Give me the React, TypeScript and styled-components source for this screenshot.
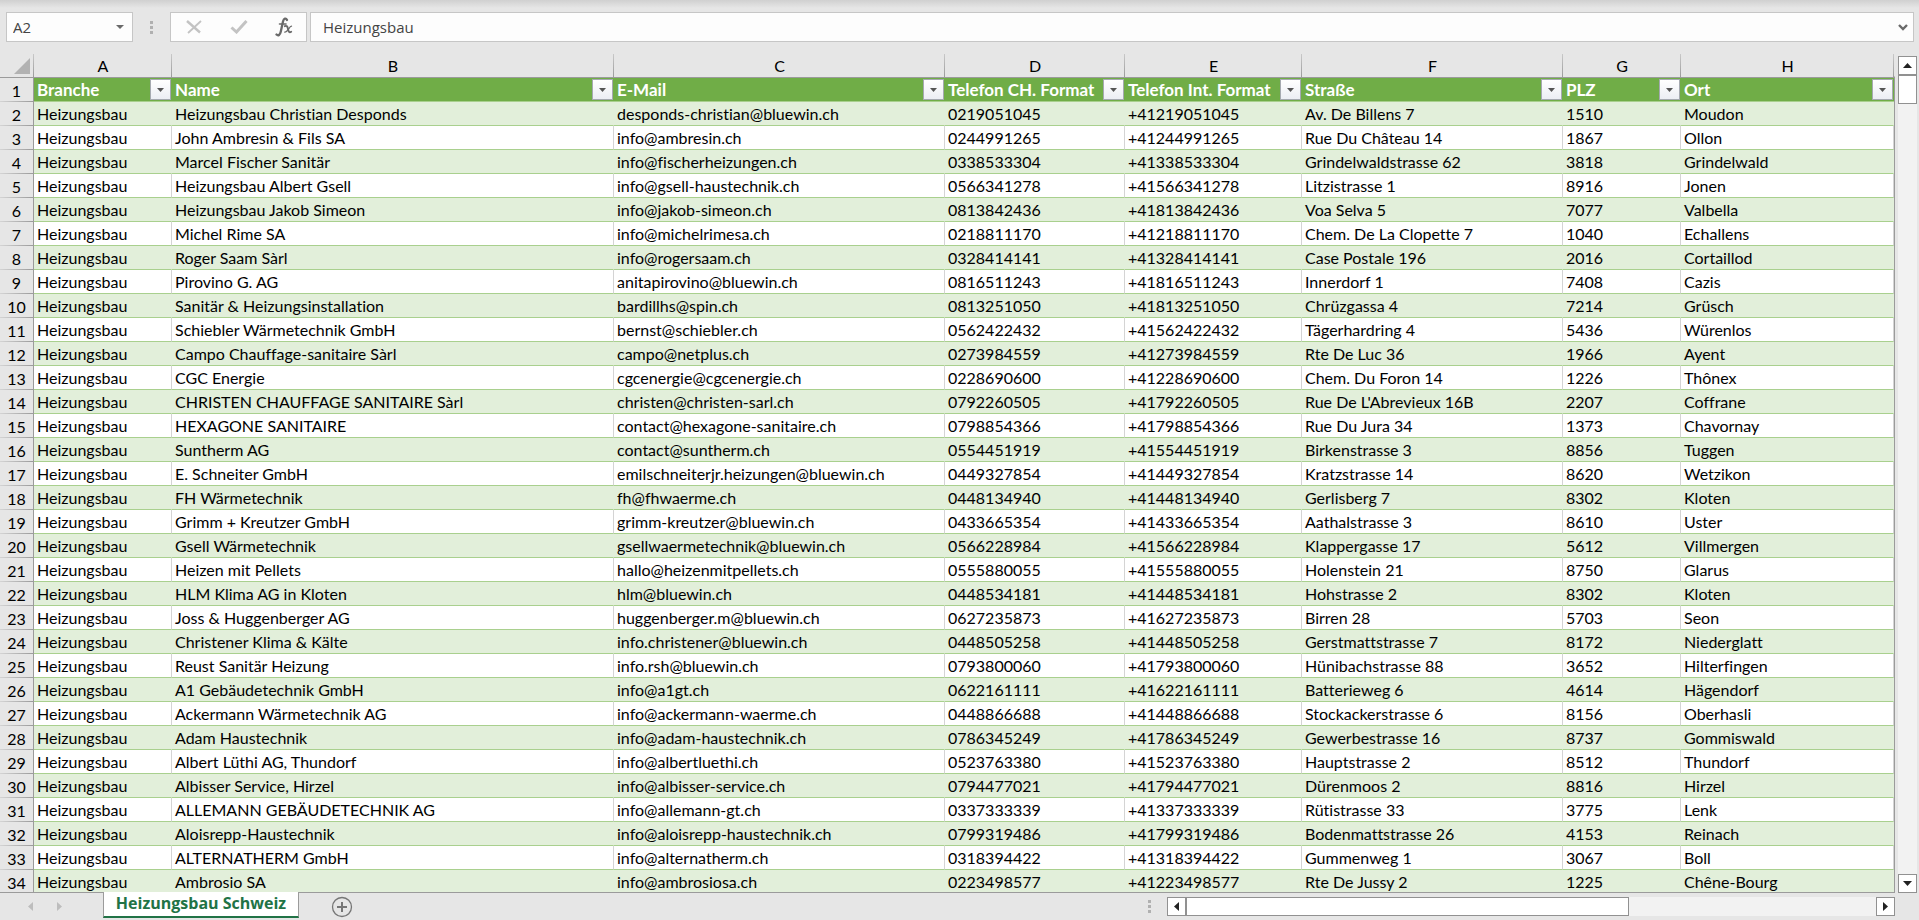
import React from "react";
import styled, { createGlobalStyle, css } from "styled-components";

const GlobalStyle = createGlobalStyle`
  *, *::before, *::after { box-sizing: border-box; }
  html, body { margin: 0; padding: 0; }
  body {
    background: #e6e6e6;
    color: #000;
    font-family: Lato, "Liberation Sans", sans-serif;
    font-size: 16px;
    font-variant-ligatures: none;
  }
  button, input { font: inherit; color: inherit; margin: 0; }
  button { padding: 0; cursor: default; }
`;

const Window = styled.div`
  display: flex;
  flex-direction: column;
  height: 100vh;
  overflow: hidden;
`;

const FormulaBar = styled.div`
  display: flex;
  flex: none;
  align-items: center;
  height: 54px;
  padding: 0 5px 0 6px;
  background: linear-gradient(#d0d0d0, #e6e6e6 8px);
  color: #444;
  font-family: "Open Sans", "Liberation Sans", sans-serif;
  font-size: 15px;
`;

const Box = styled.div`
  display: flex;
  align-items: center;
  height: 30px;
  background: #fdfdfd;
  border: 1px solid #c6c6c6;
`;

const NameBox = styled(Box)`
  width: 127px;
`;

const ToolBox = styled(Box)`
  width: 137px;
`;

const InputBox = styled(Box)`
  flex: 1;
  margin-left: 3px;
`;

const BareInput = styled.input<{ $indent: number }>`
  flex: 1;
  min-width: 0;
  height: 28px;
  padding: 0 0 0 ${(p) => p.$indent}px;
  border: 0;
  outline: 0;
  background: transparent;
`;

const BareButton = styled.button<{ $w: number }>`
  display: flex;
  flex: none;
  align-items: center;
  justify-content: center;
  width: ${(p) => p.$w}px;
  height: 28px;
  border: 0;
  background: transparent;
`;

const ToolButton = styled(BareButton)`
  flex: 1;
`;

const Grip = styled.div<{ $w: number }>`
  display: flex;
  flex: none;
  flex-direction: column;
  align-items: center;
  gap: 2px;
  width: ${(p) => p.$w}px;
  &::before, &::after, i { content: ""; width: 3px; height: 3px; background: #b0b0b0; }
`;

const Body = styled.div`
  display: flex;
  flex: 1;
  min-height: 0;
`;

const Sheet = styled.div`
  flex: 1;
  min-width: 0;
  overflow: hidden;
  border: solid #9b9b9b;
  border-width: 0 1px 1px 0;
  border-image: linear-gradient(#e6e6e6 23px, #9b9b9b 24px) 1;
`;

const Table = styled.table`
  width: 100%;
  table-layout: fixed;
  border-collapse: separate;
  border-spacing: 0;
`;

const Col = styled.col<{ $w?: number }>`
  ${(p) => p.$w && css`width: ${p.$w}px;`}
`;

const cell = css`
  height: 24px;
  padding: 0 3px;
  line-height: 23px;
  text-align: left;
  white-space: nowrap;
  overflow: hidden;
  font-weight: 400;
`;

const Letter = styled.th`
  ${cell}
  text-align: center;
  border-bottom: 1px solid #9b9b9b;
  background: linear-gradient(#c8c8c8, #9b9b9b) right / 1px 100% no-repeat;
`;

const Corner = styled.th`
  ${cell}
  padding: 4px 3px 3px 14px;
  border-bottom: 1px solid #9b9b9b;
  background: linear-gradient(#c8c8c8, #9b9b9b) right / 1px 100% no-repeat;
  svg { display: block; }
`;

const RowNumber = styled.th`
  ${cell}
  padding: 0;
  text-align: center;
  border-right: 1px solid #9b9b9b;
  background: linear-gradient(90deg, #d4d4d4, #9b9b9b) bottom / 100% 1px no-repeat;
`;

const Field = styled.th`
  ${cell}
  padding-right: 1px;
  background: #70ad47;
  border-bottom: 1px solid #a9d08e;
  color: #fff;
  font-size: 17px;
  font-weight: 700;
`;

const FieldInner = styled.div`
  display: flex;
  align-items: center;
  justify-content: space-between;
`;

const FilterButton = styled.button`
  display: flex;
  flex: none;
  align-items: center;
  justify-content: center;
  width: 21px;
  height: 21px;
  border: 1px solid #a5a9b0;
  background: linear-gradient(#fff, #eceef4);
`;

const Cell = styled.td<{ $band: boolean }>`
  ${cell}
  background: ${(p) => (p.$band ? "#e2efda" : "#fff")};
  border-bottom: 1px solid #a9d08e;
  border-right: 1px solid ${(p) => (p.$band ? "#e2efda" : "#d4d4d4")};
`;

const VScroll = styled.div`
  display: flex;
  flex: none;
  flex-direction: column;
  width: 19px;
  margin: 2px 2px 0 3px;
  background: #f2f2f2;
`;

const HScroll = styled.div`
  display: flex;
  width: 728px;
  height: 19px;
  background: #f2f2f2;
`;

const ScrollButton = styled.button`
  display: flex;
  flex: none;
  align-items: center;
  justify-content: center;
  width: 19px;
  height: 19px;
  border: 1px solid #919191;
  background: #fff;
`;

const VThumb = styled.div`
  height: 29px;
  border: 1px solid #919191;
  background: #fff;
`;

const HThumb = styled.div`
  width: 443px;
  border: 1px solid #919191;
  background: #fff;
`;

const Spacer = styled.div`
  flex: 1;
`;

const Footer = styled.footer`
  display: flex;
  flex: none;
  align-items: center;
  height: 27px;
  padding-right: 24px;
`;

const TabNav = styled.div`
  display: flex;
  width: 103px;
  padding-left: 16px;
`;

const Tab = styled.button`
  align-self: flex-start;
  width: 196px;
  height: 26px;
  margin-top: -1px;
  padding-bottom: 2px;
  border: 1px solid #9b9b9b;
  border-top: 0;
  border-bottom: 2px solid #217346;
  background: #fff;
  color: #217346;
  font-family: "Open Sans", "Liberation Sans", sans-serif;
  font-size: 16px;
  font-weight: 700;
  line-height: 22px;
`;

const AddSheet = styled(BareButton)`
  margin-left: 28px;
  height: 27px;
`;

const COLUMNS: { letter: string; label: string; width?: number }[] = [
  { letter: "A", label: "Branche", width: 138 },
  { letter: "B", label: "Name" },
  { letter: "C", label: "E-Mail", width: 331 },
  { letter: "D", label: "Telefon CH. Format", width: 180 },
  { letter: "E", label: "Telefon Int. Format", width: 177 },
  { letter: "F", label: "Straße", width: 261 },
  { letter: "G", label: "PLZ", width: 118 },
  { letter: "H", label: "Ort", width: 213 },
];

/* name, e-mail, national number, street, postcode, town */
const CONTACTS: string[][] = [
  ["Heizungsbau Christian Desponds", "desponds-christian@bluewin.ch", "0219051045", "Av. De Billens 7", "1510", "Moudon"],
  ["John Ambresin & Fils SA", "info@ambresin.ch", "0244991265", "Rue Du Château 14", "1867", "Ollon"],
  ["Marcel Fischer Sanitär", "info@fischerheizungen.ch", "0338533304", "Grindelwaldstrasse 62", "3818", "Grindelwald"],
  ["Heizungsbau Albert Gsell", "info@gsell-haustechnik.ch", "0566341278", "Litzistrasse 1", "8916", "Jonen"],
  ["Heizungsbau Jakob Simeon", "info@jakob-simeon.ch", "0813842436", "Voa Selva 5", "7077", "Valbella"],
  ["Michel Rime SA", "info@michelrimesa.ch", "0218811170", "Chem. De La Clopette 7", "1040", "Echallens"],
  ["Roger Saam Sàrl", "info@rogersaam.ch", "0328414141", "Case Postale 196", "2016", "Cortaillod"],
  ["Pirovino G. AG", "anitapirovino@bluewin.ch", "0816511243", "Innerdorf 1", "7408", "Cazis"],
  ["Sanitär & Heizungsinstallation", "bardillhs@spin.ch", "0813251050", "Chrüzgassa 4", "7214", "Grüsch"],
  ["Schiebler Wärmetechnik GmbH", "bernst@schiebler.ch", "0562422432", "Tägerhardring 4", "5436", "Würenlos"],
  ["Campo Chauffage-sanitaire Sàrl", "campo@netplus.ch", "0273984559", "Rte De Luc 36", "1966", "Ayent"],
  ["CGC Energie", "cgcenergie@cgcenergie.ch", "0228690600", "Chem. Du Foron 14", "1226", "Thônex"],
  ["CHRISTEN CHAUFFAGE SANITAIRE Sàrl", "christen@christen-sarl.ch", "0792260505", "Rue De L'Abrevieux 16B", "2207", "Coffrane"],
  ["HEXAGONE SANITAIRE", "contact@hexagone-sanitaire.ch", "0798854366", "Rue Du Jura 34", "1373", "Chavornay"],
  ["Suntherm AG", "contact@suntherm.ch", "0554451919", "Birkenstrasse 3", "8856", "Tuggen"],
  ["E. Schneiter GmbH", "emilschneiterjr.heizungen@bluewin.ch", "0449327854", "Kratzstrasse 14", "8620", "Wetzikon"],
  ["FH Wärmetechnik", "fh@fhwaerme.ch", "0448134940", "Gerlisberg 7", "8302", "Kloten"],
  ["Grimm + Kreutzer GmbH", "grimm-kreutzer@bluewin.ch", "0433665354", "Aathalstrasse 3", "8610", "Uster"],
  ["Gsell Wärmetechnik", "gsellwaermetechnik@bluewin.ch", "0566228984", "Klappergasse 17", "5612", "Villmergen"],
  ["Heizen mit Pellets", "hallo@heizenmitpellets.ch", "0555880055", "Holenstein 21", "8750", "Glarus"],
  ["HLM Klima AG in Kloten", "hlm@bluewin.ch", "0448534181", "Hohstrasse 2", "8302", "Kloten"],
  ["Joss & Huggenberger AG", "huggenberger.m@bluewin.ch", "0627235873", "Birren 28", "5703", "Seon"],
  ["Christener Klima & Kälte", "info.christener@bluewin.ch", "0448505258", "Gerstmattstrasse 7", "8172", "Niederglatt"],
  ["Reust Sanitär Heizung", "info.rsh@bluewin.ch", "0793800060", "Hünibachstrasse 88", "3652", "Hilterfingen"],
  ["A1 Gebäudetechnik GmbH", "info@a1gt.ch", "0622161111", "Batterieweg 6", "4614", "Hägendorf"],
  ["Ackermann Wärmetechnik AG", "info@ackermann-waerme.ch", "0448866688", "Stockackerstrasse 6", "8156", "Oberhasli"],
  ["Adam Haustechnik", "info@adam-haustechnik.ch", "0786345249", "Gewerbestrasse 16", "8737", "Gommiswald"],
  ["Albert Lüthi AG, Thundorf", "info@albertluethi.ch", "0523763380", "Hauptstrasse 2", "8512", "Thundorf"],
  ["Albisser Service, Hirzel", "info@albisser-service.ch", "0794477021", "Dürenmoos 2", "8816", "Hirzel"],
  ["ALLEMANN GEBÄUDETECHNIK AG", "info@allemann-gt.ch", "0337333339", "Rütistrasse 33", "3775", "Lenk"],
  ["Aloisrepp-Haustechnik", "info@aloisrepp-haustechnik.ch", "0799319486", "Bodenmattstrasse 26", "4153", "Reinach"],
  ["ALTERNATHERM GmbH", "info@alternatherm.ch", "0318394422", "Gummenweg 1", "3067", "Boll"],
  ["Ambrosio SA", "info@ambrosiosa.ch", "0223498577", "Rte De Jussy 2", "1225", "Chêne-Bourg"],
];

const toRow = ([name, mail, phone, street, zip, town]: string[]) => [
  "Heizungsbau",
  name,
  mail,
  phone,
  "+41" + phone.slice(1),
  street,
  zip,
  town,
];

type Direction = "up" | "down" | "left" | "right";

const ARROWS: Record<Direction, { w: number; h: number; points: string }> = {
  up: { w: 9, h: 5, points: "0,5 4.5,0 9,5" },
  down: { w: 9, h: 5, points: "0,0 9,0 4.5,5" },
  left: { w: 5, h: 9, points: "5,0 5,9 0,4.5" },
  right: { w: 5, h: 9, points: "0,0 5,4.5 0,9" },
};

const Arrow = ({ dir, color = "#222" }: { dir: Direction; color?: string }) => {
  const { w, h, points } = ARROWS[dir];
  return (
    <svg width={w} height={h} viewBox={`0 0 ${w} ${h}`} aria-hidden="true">
      <polygon points={points} fill={color} />
    </svg>
  );
};

export default function App() {
  return (
    <Window>
      <GlobalStyle />
      <FormulaBar>
        <NameBox>
          <BareInput $indent={6} aria-label="Namenfeld" defaultValue="A2" />
          <BareButton $w={24} aria-label="Namen anzeigen">
            <svg width="8" height="4" viewBox="0 0 8 4"><path d="M0 0h8L4 4z" fill="#6a6a6a" /></svg>
          </BareButton>
        </NameBox>
        <Grip $w={37}><i /></Grip>
        <ToolBox>
          <ToolButton $w={45} aria-label="Abbrechen">
            <svg width="16" height="14" viewBox="0 0 16 14" fill="none" stroke="#c3c3c3">
              <path d="M1 1l13 11.500" strokeWidth="2.400" />
              <path d="M15 1L2 13" strokeWidth="1.800" />
            </svg>
          </ToolButton>
          <ToolButton $w={45} aria-label="Eingeben">
            <svg width="18" height="14" viewBox="0 0 18 14">
              <path d="M1.500 7.500l5 4.500L16.500 1" stroke="#c3c3c3" strokeWidth="3" fill="none" />
            </svg>
          </ToolButton>
          <ToolButton $w={45} aria-label="Funktion einfügen">
            <svg width="18" height="20" viewBox="0 0 18 20" fill="none" stroke="#6a6a6a" strokeLinecap="round" aria-hidden="true">
              <path d="M12 3C11 .8 8.800 1.200 8 4.500L5.800 14.500C5.100 18 3.200 19.200 1.500 17.500" strokeWidth="2.300" />
              <path d="M4.500 7h6.500" strokeWidth="1.600" />
              <path d="M9.800 9.200c2-.9 2.700.1 3.200 2.800s1.200 4 3.200 2.800" strokeWidth="1.900" />
              <path d="M16.500 9.200c-2-.2-4 6.200-6.800 5.900" strokeWidth="1.300" />
            </svg>
          </ToolButton>
        </ToolBox>
        <InputBox>
          <BareInput $indent={12} aria-label="Bearbeitungsleiste" defaultValue="Heizungsbau" />
          <BareButton $w={20} aria-label="Bearbeitungsleiste erweitern">
            <svg width="10" height="7" viewBox="0 0 10 7">
              <path d="M1 1l4 4 4-4" stroke="#6a6a6a" strokeWidth="2.400" fill="none" />
            </svg>
          </BareButton>
        </InputBox>
      </FormulaBar>

      <Body>
        <Sheet>
          <Table>
            <colgroup>
              <Col $w={34} />
              {COLUMNS.map((c) => <Col key={c.letter} $w={c.width} />)}
            </colgroup>
            <thead>
              <tr>
                <Corner aria-label="Alles auswählen">
                  <svg width="16" height="16" viewBox="0 0 16 16"><path d="M16 0v16H0z" fill="#b2b2b2" /></svg>
                </Corner>
                {COLUMNS.map((c) => <Letter key={c.letter} scope="col">{c.letter}</Letter>)}
              </tr>
              <tr>
                <RowNumber scope="row">1</RowNumber>
                {COLUMNS.map((c) => (
                  <Field key={c.letter} scope="col">
                    <FieldInner>
                      {c.label}
                      <FilterButton aria-label={`${c.label} filtern`}>
                        <svg width="7" height="4" viewBox="0 0 7 4"><path d="M0 0h7L3.500 4z" fill="#555" /></svg>
                      </FilterButton>
                    </FieldInner>
                  </Field>
                ))}
              </tr>
            </thead>
            <tbody>
              {CONTACTS.map((contact, r) => (
                <tr key={contact[1]}>
                  <RowNumber scope="row">{r + 2}</RowNumber>
                  {toRow(contact).map((value, i) => (
                    <Cell key={COLUMNS[i].letter} $band={r % 2 === 0}>{value}</Cell>
                  ))}
                </tr>
              ))}
            </tbody>
          </Table>
        </Sheet>
        <VScroll>
          <ScrollButton aria-label="Nach oben"><Arrow dir="up" /></ScrollButton>
          <VThumb />
          <Spacer />
          <ScrollButton aria-label="Nach unten"><Arrow dir="down" /></ScrollButton>
        </VScroll>
      </Body>

      <Footer>
        <TabNav>
          <BareButton $w={29} aria-label="Vorheriges Blatt"><Arrow dir="left" color="#bdbdbd" /></BareButton>
          <BareButton $w={29} aria-label="Nächstes Blatt"><Arrow dir="right" color="#bdbdbd" /></BareButton>
        </TabNav>
        <Tab>Heizungsbau Schweiz</Tab>
        <AddSheet $w={30} aria-label="Neues Blatt">
          <svg width="22" height="22" viewBox="0 0 22 22" fill="none" stroke="#767676">
            <circle cx="11" cy="11" r="9.500" strokeWidth="1.300" />
            <path d="M11 6v10M6 11h10" strokeWidth="2" />
          </svg>
        </AddSheet>
        <Spacer />
        <Grip $w={35}><i /></Grip>
        <HScroll>
          <ScrollButton aria-label="Nach links"><Arrow dir="left" /></ScrollButton>
          <HThumb />
          <Spacer />
          <ScrollButton aria-label="Nach rechts"><Arrow dir="right" /></ScrollButton>
        </HScroll>
      </Footer>
    </Window>
  );
}
